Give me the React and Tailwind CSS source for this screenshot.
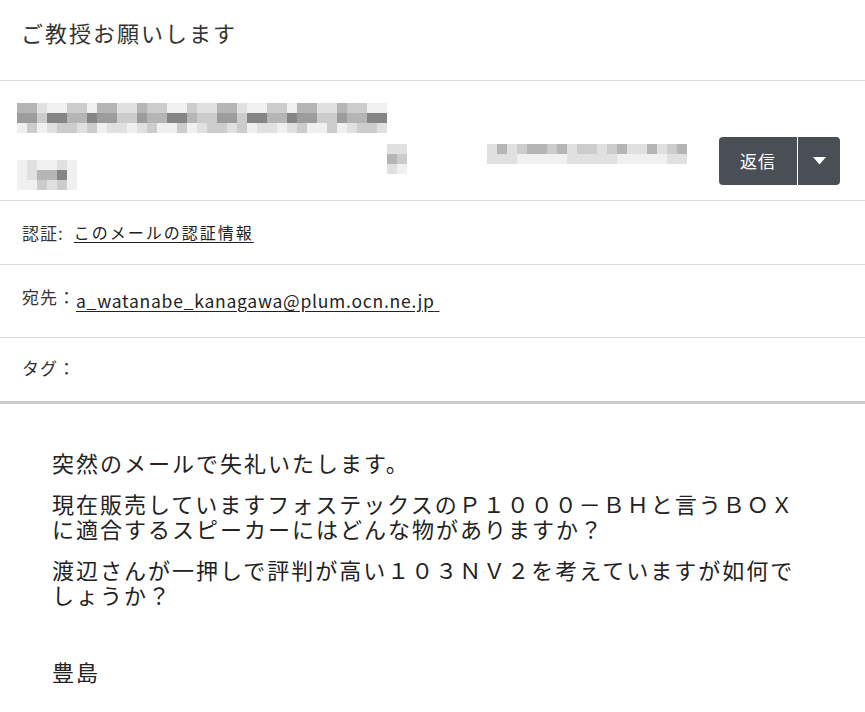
const shades = [
  "bg-[#f0f0f0]",
  "bg-[#e0e0e0]",
  "bg-[#cccccc]",
  "bg-[#b5b5b5]",
  "bg-[#9c9c9c]",
  "bg-[#858585]",
];

// pixelated (blurred) block, rows of shade indexes
const Mosaic = ({ rows, cell = 10, className = "" }) => (
  <div className={"flex flex-col " + className}>
    {rows.map((row, i) => (
      <div key={i} className="flex">
        {row.map((s, j) => (
          <div
            key={j}
            className={shades[s]}
            style={{ width: cell, height: cell }}
          />
        ))}
      </div>
    ))}
  </div>
);

const seq = (len, seed, lo, hi) =>
  Array.from({ length: len }, (_, i) => lo + ((i * 7 + seed * 3 + ((i * i) % 5)) % (hi - lo + 1)));

const nameRows = [seq(37, 1, 0, 3), seq(37, 2, 2, 5), seq(37, 3, 0, 2)];
const smallRows = [[0, 1, 0, 0, 1, 0], [0, 1, 3, 3, 5, 0], [0, 0, 2, 1, 2, 0]];
const tinyRows = [[1, 1], [3, 2], [1, 0]];
const addrRows = [seq(20, 4, 1, 3), seq(20, 5, 0, 1)];

const Row = ({ label, children, h }) => (
  <div className={"flex items-center border-b border-[#dcdcdc] px-[22px] " + h}>
    <span className="text-[17px] tracking-[1px] text-[#333]">{label}</span>
    {children}
  </div>
);

export default function App() {
  return (
    <div className="w-[865px] min-h-[712px] bg-white font-['Noto_Sans_CJK_JP',sans-serif] text-[#222]">
      {/* subject */}
      <div className="h-[81px] border-b border-[#dcdcdc] pl-[21px] pt-[19px]">
        <h1 className="text-[22px] leading-[26px] tracking-[2px] text-[#333]">ご教授お願いします</h1>
      </div>

      {/* sender */}
      <div className="flex h-[120px] border-b border-[#dcdcdc] pl-[17px] pr-[25px]">
        <div className="flex flex-1 flex-col pt-[22px]">
          <Mosaic rows={nameRows} />
          <div className="mt-[11px] flex items-start">
            <Mosaic rows={smallRows} className="mt-[16px]" />
            <Mosaic rows={tinyRows} className="ml-[310px]" />
            <Mosaic rows={addrRows} className="ml-[80px]" />
          </div>
        </div>
        <div className="mt-[56px] flex h-[48px] overflow-hidden rounded-[4px] bg-[#4a4e55] text-white">
          <button className="w-[78px] text-[17px] tracking-[1px]">返信</button>
          <div className="w-px bg-white" />
          <button className="flex w-[42px] items-center justify-center">
            <svg width="13" height="8" viewBox="0 0 13 8">
              <path d="M0 0h13L6.5 7.5z" fill="white" />
            </svg>
          </button>
        </div>
      </div>

      <Row label="認証:" h="h-[64px]">
        <a className="mb-[2px] ml-[10px] text-[16px] tracking-[2px] underline underline-offset-[3px]">このメールの認証情報</a>
      </Row>
      <div className="flex h-[73px] items-start border-b border-[#dcdcdc] px-[22px] pt-[19px]">
        <span className="text-[17px] tracking-[1px] text-[#333]">宛先：</span>
        <a className="mt-[4px] text-[17.5px] tracking-[0.75px] underline underline-offset-[3px]">
          a_watanabe_kanagawa@plum.ocn.ne.jp{"\u00a0"}
        </a>
      </div>
      <div className="flex h-[66px] items-center border-b-[3px] border-[#cbcbcb] px-[22px] pb-[4px]">
        <span className="text-[17px] tracking-[1px] text-[#333]">タグ：</span>
      </div>

      {/* body */}
      <div className="px-[52px] pt-[46px] text-[22px] leading-[25px] tracking-[2px]">
        <p>突然のメールで失礼いたします。</p>
        <p className="mt-[16px]">現在販売していますフォステックスのＰ１０００－ＢＨと言うＢＯＸに適合するスピーカーにはどんな物がありますか？</p>
        <p className="mt-[16px]">渡辺さんが一押しで評判が高い１０３ＮＶ２を考えていますが如何でしょうか？</p>
        <p className="mt-[52px]">豊島</p>
      </div>
    </div>
  );
}
